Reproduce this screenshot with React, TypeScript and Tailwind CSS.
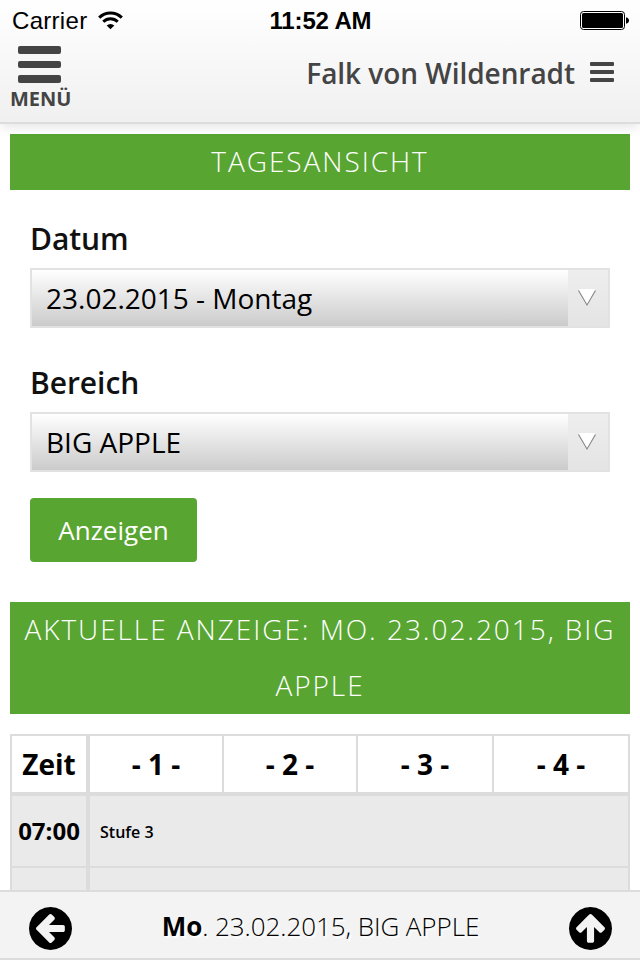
// src/App.tsx
// Day view of the schedule

import type { ReactNode } from "react";

const columns = ["- 1 -", "- 2 -", "- 3 -", "- 4 -"];

function StatusBar() {
  return (
    <div className="grid h-10 grid-cols-3 items-center pl-3 pr-[11px] font-['Liberation_Sans'] text-2xl leading-none text-black">
      <div className="flex items-center gap-[11px]">
        <span className="mt-[2px] w-[75px] tracking-[0.3px]">Carrier</span>
        <svg width="25" height="19" viewBox="0 0 25 19">
          <g fill="none" stroke="#000" strokeWidth="3">
            <path d="M1.2 6.6a16 16 0 0 1 22.6 0" />
            <path d="M5.3 10.8a10.2 10.2 0 0 1 14.4 0" />
          </g>
          <path d="M8.7 14.5a5.4 5.4 0 0 1 7.6 0L12.5 18.3z" />
        </svg>
      </div>
      <span className="mt-[2px] text-center font-bold tracking-[-0.15px]">11:52 AM</span>
      <svg className="justify-self-end" width="49" height="19" viewBox="0 0 49 19">
        <rect x="0.5" y="0.5" width="44" height="18" rx="3" fill="#fff" stroke="#000" />
        <rect x="2" y="2" width="41" height="15" rx="1.5" />
        <path d="M46 6.2q3 .8 3 3.3t-3 3.3z" />
      </svg>
    </div>
  );
}

function Header() {
  return (
    <header className="relative h-[124px] border-b-2 border-[#dcdcdc] bg-linear-to-b from-white to-[#f0f0f0] text-[#444] shadow-[0_2px_12px_rgba(0,0,0,0.12)]">
      <StatusBar />
      <div className="flex justify-between pl-[10px] pr-[26px]">
        <div className="flex flex-col pt-[6px]">
          <div className="ml-2 flex flex-col gap-[7px]">
            <div className="h-[7.5px] w-[43px] rounded-[2px] bg-[#444]"></div>
            <div className="h-[7.5px] w-[43px] rounded-[2px] bg-[#444]"></div>
            <div className="h-[7.5px] w-[43px] rounded-[2px] bg-[#444]"></div>
          </div>
          <span className="mt-1 text-xl leading-[24px] font-bold">MENÜ</span>
        </div>
        <div className="flex h-[66px] items-center gap-[15px]">
          <span className="text-[28px] font-semibold tracking-[-0.05px]">Falk von Wildenradt</span>
          <div className="mb-[2px] flex flex-col gap-1">
            <div className="h-1 w-6 rounded-[1px] bg-[#444]"></div>
            <div className="h-1 w-6 rounded-[1px] bg-[#444]"></div>
            <div className="h-1 w-6 rounded-[1px] bg-[#444]"></div>
          </div>
        </div>
      </div>
    </header>
  );
}

function Banner({ children }: { children: ReactNode }) {
  return (
    <h2 className="bg-[#58a532] px-2 text-center text-[28px] leading-[56px] font-light tracking-[1.95px] text-white uppercase">
      <span className="relative -top-px">{children}</span>
    </h2>
  );
}

function SelectField({ label, value }: { label: string; value: string }) {
  return (
    <div>
      <div className="h-[50px] text-[30px] leading-[42px] font-semibold tracking-[-0.05px] text-[#111]">{label}</div>
      <div className="flex h-[60px] border-2 border-[#e2e2e2]">
        <div className="flex-1 bg-linear-to-b from-white to-[#cbcbcb] pl-[14px] text-[28px] leading-[56px] text-black">
          {value}
        </div>
        <div className="flex w-10 items-center bg-linear-to-b from-[#eee] to-[#e4e4e4] pl-[10px]">
          <svg width="18" height="18" viewBox="0 0 18 18">
            <path d="M.5 0h17L9 15.5z" fill="#fff" />
            <path d="M.5 1.5L9 16 17.5 1.5" fill="none" stroke="#888" strokeWidth="1.1" />
          </svg>
        </div>
      </div>
    </div>
  );
}

function ArrowCircle({ className }: { className?: string }) {
  return (
    <svg className={className} width="43" height="43" viewBox="128 128 1536 1536">
      <path d="M1408 960v-128q0-26-19-45t-45-19h-502l189-189q19-19 19-45t-19-45l-91-91q-18-18-45-18t-45 18l-362 362-91 91q-18 18-18 45t18 45l91 91 362 362q18 18 45 18t45-18l91-91q18-18 18-45t-18-45l-189-189h502q26 0 45-19t19-45zm256-64q0 209-103 385.5t-279.5 279.5-385.5 103-385.5-103-279.5-279.5-103-385.5 103-385.5 279.5-279.5 385.5-103 385.5 103 279.5 279.5 103 385.5z" />
    </svg>
  );
}

function Schedule() {
  return (
    <div className="mt-5 border-2 border-b-0 border-[#dcdcdc] text-black">
      <div className="grid h-[60px] grid-cols-[78px_134px_134px_136px_134px] border-b-4 border-[#dcdcdc] text-center text-[28px] leading-[56px] font-bold">
        <div className="border-r-4 border-[#dcdcdc]">Zeit</div>
        {columns.map((name) => (
          <div key={name} className="border-r-2 border-[#dcdcdc] last:border-r-0">
            {name}
          </div>
        ))}
      </div>
      <div className="grid h-[72px] grid-cols-[78px_1fr] border-b-2 border-[#dcdcdc] bg-[#eaeaea]">
        <div className="border-r-4 border-[#dcdcdc] text-center text-2xl leading-[70px] font-bold">07:00</div>
        <div className="pl-[10px] text-base leading-[72px] font-semibold">Stufe 3</div>
      </div>
      <div className="grid h-[22px] grid-cols-[78px_1fr] bg-[#eaeaea]">
        <div className="border-r-4 border-[#dcdcdc]"></div>
      </div>
    </div>
  );
}

function Footer() {
  return (
    <footer className="flex h-[70px] items-center justify-between border-y-2 border-[#dcdcdc] bg-[#f3f3f3] pr-[28px] pl-[29px] text-black">
      <ArrowCircle className="mt-[7px]" />
      <span className="mt-[2px] text-[26px] font-light tracking-[-0.07px] [text-shadow:2px_2px_1px_#fff]">
        <b className="font-bold">Mo</b>. 23.02.2015, BIG APPLE
      </span>
      <ArrowCircle className="mt-[7px] rotate-90" />
    </footer>
  );
}

export default function App() {
  return (
    <div className="flex h-[960px] w-[640px] flex-col overflow-hidden bg-white font-['Open_Sans',sans-serif]">
      <Header />
      <main className="h-[766px] overflow-hidden px-[10px] pt-[10px]">
        <Banner>Tagesansicht</Banner>
        <div className="px-5 pt-7">
          <SelectField label="Datum" value="23.02.2015 - Montag" />
          <div className="h-[34px]"></div>
          <SelectField label="Bereich" value="BIG APPLE" />
          <button className="mt-[26px] mb-10 block h-16 w-[167px] rounded-[4px] bg-[#58a532] text-[26px] text-white">
            Anzeigen
          </button>
        </div>
        <Banner>Aktuelle Anzeige: Mo. 23.02.2015, Big Apple</Banner>
        <Schedule />
      </main>
      <Footer />
    </div>
  );
}
